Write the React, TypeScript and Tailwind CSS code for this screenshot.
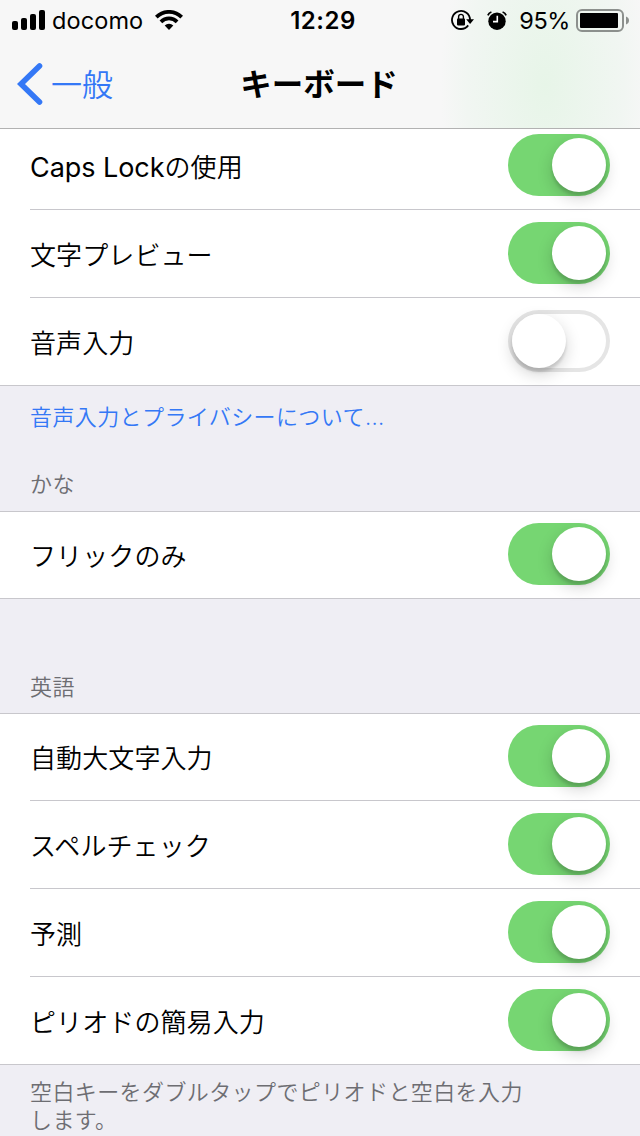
import { Fragment, ReactNode } from "react";
import clsx from "clsx";

const Signal = () => (
  <svg width="34" height="20" viewBox="0 0 34 20">
    <rect x="0" y="11" width="6" height="9" rx="2" />
    <rect x="9" y="8" width="6" height="12" rx="2" />
    <rect x="18" y="4" width="6" height="16" rx="2" />
    <rect x="27" y="0" width="6" height="20" rx="2" />
  </svg>
);

const Wifi = () => (
  <svg width="28" height="20" viewBox="0 0 28 20">
    <g fill="none" stroke="black" strokeWidth="3.8">
      <path d="M1.3 7.1a18 18 0 0 1 25.4 0" />
      <path d="M5.9 11.8a11.5 11.5 0 0 1 16.2 0" />
    </g>
    <path d="M14 20l-4.3-4.4a6.1 6.1 0 0 1 8.6 0z" />
  </svg>
);

const RotationLock = () => (
  <svg width="23" height="20" viewBox="0 0 23 20">
    <path
      d="M17.2 15.4A9 9 0 1 1 19 10.2"
      fill="none"
      stroke="black"
      strokeWidth="1.8"
    />
    <path d="M15.2 9.2h7.8L19.1 14z" />
    <rect x="6" y="8.4" width="8" height="7" rx="0.8" />
    <path
      d="M7.6 9V6.8a2.4 2.4 0 0 1 4.8 0V9"
      fill="none"
      stroke="black"
      strokeWidth="1.4"
    />
  </svg>
);

const Alarm = () => (
  <svg width="20" height="19" viewBox="0 0 20 19">
    <circle cx="10" cy="10.2" r="8.7" />
    <path
      d="M10.3 4.8v5.8H6"
      fill="none"
      stroke="white"
      strokeWidth="1.6"
    />
    <path
      d="M.9 4.4Q1.8 1.9 4.4 1M19.1 4.4Q18.2 1.9 15.6 1"
      fill="none"
      stroke="black"
      strokeWidth="1.8"
    />
  </svg>
);

const Battery = () => (
  <svg width="53" height="23" viewBox="0 0 53 23">
    <rect
      x="1"
      y="1"
      width="46"
      height="21"
      rx="5"
      fill="none"
      stroke="#8c908d"
      strokeWidth="2"
    />
    <rect x="4" y="4" width="38" height="15" rx="1" />
    <path d="M50 7.5q3 1.2 3 4t-3 4z" fill="#8c908d" />
  </svg>
);

const StatusBar = () => (
  <div className="grid grid-cols-3 h-10 px-3 items-center text-[23.5px]">
    <div className="flex items-center">
      <Signal />
      <span className="pl-[6px] pr-3 pt-[2px] tracking-[0.1px]">docomo</span>
      <Wifi />
    </div>
    <div className="pl-[6px] pt-[2px] text-center text-[24px] font-semibold tracking-[0.5px]">
      12:29
    </div>
    <div className="flex items-center justify-end -mr-3 pr-[11px]">
      <RotationLock />
      <span className="pl-[13px]">
        <Alarm />
      </span>
      <span className="pl-3 pr-[6px] pt-[2px] tracking-[-0.4px]">95%</span>
      <Battery />
    </div>
  </div>
);

const NavBar = () => (
  <div className="grid grid-cols-3 h-22 items-center">
    <a className="flex items-center pl-[17px] text-[#3478f6]">
      <svg width="26" height="42" viewBox="0 0 26 42">
        <path
          d="M22.5 3L4 21l18.5 18"
          fill="none"
          stroke="currentColor"
          strokeWidth="5.6"
          strokeLinecap="round"
        />
      </svg>
      <span className="pl-2 pt-px text-[31px] font-[350] leading-10">
        一般
      </span>
    </a>
    <h1 className="pt-px text-center text-[31.5px] font-bold leading-10 -ml-[2px]">
      キーボード
    </h1>
  </div>
);

const Switch = ({ on }: { on: boolean }) => (
  <div
    role="switch"
    aria-checked={on}
    className={clsx(
      "flex w-[102px] h-[62px] p-1 rounded-full",
      on
        ? "bg-[#76d672] justify-end"
        : "bg-white justify-start shadow-[inset_0_0_0_4px_#e5e5e5]"
    )}
  >
    <div className="size-[54px] rounded-full bg-white shadow-[0_6px_16px_rgba(0,0,0,0.18),0_4px_3px_rgba(0,0,0,0.12)]" />
  </div>
);

const Row = ({ label, on }: { label: ReactNode; on: boolean }) => (
  <div className="flex h-[87px] px-[30px] pt-3 items-start justify-between">
    <span className="pt-[14px] text-[26px] font-[350] leading-10 tracking-[0.1px]">
      {label}
    </span>
    <Switch on={on} />
  </div>
);

type Item = [label: ReactNode, on: boolean];

const Group = ({ items }: { items: Item[] }) => (
  <section className="bg-white border-b border-[#c8c7cc]">
    {items.map(([label, on], i) => (
      <Fragment key={i}>
        {i > 0 && <hr className="ml-[30px] border-[#c8c7cc]" />}
        {/* the first row shares its top pixel with the group's hairline */}
        <div
          className={clsx(
            i === 0 &&
              "border-t border-[#c8c7cc] [&>div]:h-[86px] [&>div]:pt-[11px]"
          )}
        >
          <Row label={label} on={on} />
        </div>
      </Fragment>
    ))}
  </section>
);

const Note = ({
  children,
  className,
}: {
  children: ReactNode;
  className?: string;
}) => (
  <p
    className={clsx(
      "px-[30px] text-[22px] font-[350] leading-7 tracking-[0.4px]",
      className
    )}
  >
    {children}
  </p>
);

export default function App() {
  return (
    <div className="w-[640px] h-[1136px] overflow-hidden flex flex-col bg-[#efeef4] text-black font-[Inter,'Noto_Sans_CJK_JP',sans-serif]">
      <header className="relative z-10 shrink-0 h-[129px] border-b border-[#b2b2b2] bg-[#f7f7f7] bg-[radial-gradient(ellipse_105px_200px_at_545px_85px,#e7f5e8,#f1f6f2_75%,#f7f7f7)]">
        <StatusBar />
        <NavBar />
      </header>
      <main className="-mt-[7px]">
        <Group
          items={[
            [
              <>
                <span className="text-[27px] font-normal tracking-[-0.05px]">
                  Caps Lock
                </span>
                の使用
              </>,
              true,
            ],
            ["文字プレビュー", true],
            ["音声入力", false],
          ]}
        />
        <Note className="pt-[17px] text-[#3478f6]">
          音声入力とプライバシーについて...
        </Note>
        <Note className="pt-[39px] pb-[13px] text-[#6d6d72]">かな</Note>
        <Group items={[["フリックのみ", true]]} />
        <Note className="pt-[74px] pb-[12px] text-[#6d6d72]">英語</Note>
        <Group
          items={[
            ["自動大文字入力", true],
            ["スペルチェック", true],
            ["予測", true],
            ["ピリオドの簡易入力", true],
          ]}
        />
        <Note className="pt-[13px] text-[#6d6d72]">
          空白キーをダブルタップでピリオドと空白を入力
          <br />
          します。
        </Note>
      </main>
    </div>
  );
}
